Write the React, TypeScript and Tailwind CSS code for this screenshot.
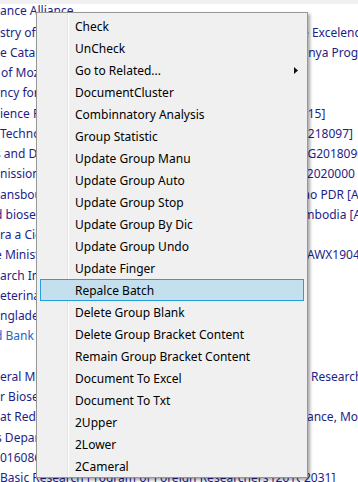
// App.tsx
interface BgRow {
  left: string;
  leftShift: number;
  right?: string;
  rightAt?: number;
  color?: string;
}

// rows behind the context menu (list scrolled sideways, only the edges show)
const rows: BgRow[] = [
  { left: 'stry of Agriculture', leftShift: 0, right: 'e Excelence', rightAt: 302 },
  { left: 'e Catalan', leftShift: 0, right: 'Kenya Program', rightAt: 294 },
  { left: 'of Mozambique', leftShift: 1 },
  { left: 'ncy for', leftShift: 0 },
  { left: 'ience Fund', leftShift: 0, right: '2015]', rightAt: 294 },
  { left: 'Technology', leftShift: 0, right: '0218097]', rightAt: 301 },
  { left: 's and Development', leftShift: -5, right: 'AG2018090', rightAt: 300 },
  { left: 'nission', leftShift: 0, right: 'Z2020000', rightAt: 300 },
  { left: 'ansbourg', leftShift: 0, right: 'Lao PDR [A', rightAt: 297 },
  { left: 'd biosecurity', leftShift: -5, right: 'Cambodia [A', rightAt: 289 },
  { left: 'ra a Ciencia', leftShift: 0 },
  { left: 'e Ministry', leftShift: -5, right: '[AWX19040', rightAt: 303 },
  { left: 'arch Institute', leftShift: 0 },
  { left: 'eterinary', leftShift: 0 },
  { left: 'nglades', leftShift: 0 },
  { left: 'd Bank', leftShift: -5, color: 'text-[#2566c6]' },
  { left: '', leftShift: 0 },
  { left: 'eral Ministry', leftShift: 0, right: 'r Research', rightAt: 303 },
  { left: 'r Biosecurity', leftShift: 0 },
  { left: 'at Red', leftShift: 0, right: 'Alliance, Mo', rightAt: 290 },
  { left: 's Department', leftShift: -4 },
  { left: '016086', leftShift: 0 },
  { left: 'Basic Research Program of Foreign Researchers [2016YF', leftShift: 0, right: '2031]', rightAt: 304 },
];

const items = [
  'Check',
  'UnCheck',
  'Go to Related...',
  'DocumentCluster',
  'Combinnatory Analysis',
  'Group Statistic',
  'Update Group Manu',
  'Update Group Auto',
  'Update Group Stop',
  'Update Group By Dic',
  'Update Group Undo',
  'Update Finger',
  'Repalce Batch',
  'Delete Group Blank',
  'Delete Group Bracket Content',
  'Remain Group Bracket Content',
  'Document To Excel',
  'Document To Txt',
  '2Upper',
  '2Lower',
  '2Cameral',
];

function ContextMenu() {
  return (
    <div className="absolute left-[36px] top-[12px] w-[272px] border border-[#979797] bg-[#f0f0f0] pt-[2px] shadow-[2px_2px_3px_rgba(0,0,0,0.35)]">
      {/* icon column divider */}
      <div className="absolute left-[30px] top-0 bottom-0 w-[1px] bg-[#e2e3e3]" />
      <div className="absolute left-[31px] top-0 bottom-0 w-[1px] bg-white" />
      {items.map((label) => {
        const active = label === 'Repalce Batch';
        return (
          <div
            key={label}
            className={
              active
                ? 'relative mx-[3px] flex h-[22px] items-center border border-[#26a0da] bg-[#c4e0ef] pl-[34px] pt-[2px] text-black'
                : 'relative mx-[3px] flex h-[22px] items-center border border-transparent pl-[34px] pt-[2px] text-black'
            }
          >
            <span>{label}</span>
            {label === 'Go to Related...' && (
              <svg className="ml-auto mr-[5px] mb-[1px]" width="4" height="7" viewBox="0 0 4 7">
                <path d="M0 0L4 3.5L0 7Z" fill="#111" />
              </svg>
            )}
          </div>
        );
      })}
    </div>
  );
}

export default function App() {
  return (
    <div className="relative h-[482px] w-[358px] overflow-hidden bg-white font-['Noto_Sans',sans-serif] text-[12px] text-[#1e1e88]">
      <div className="h-[4px] bg-[#f0f0f0]" />
      <div className="mt-[-4px] flex h-[22.5px] items-center whitespace-nowrap pb-[1px]">ance Alliance</div>
      {rows.map((r, i) => (
        <div key={i} className={`flex h-[20.25px] items-center whitespace-nowrap ${r.color ?? ''}`}>
          <div className="w-[300px] shrink-0 overflow-hidden">
            <span className="block" style={{ marginLeft: r.leftShift }}>
              {r.left}
            </span>
          </div>
          {r.right && (
            <span className="shrink-0" style={{ marginLeft: (r.rightAt ?? 300) - 300 }}>
              {r.right}
            </span>
          )}
        </div>
      ))}
      <ContextMenu />
    </div>
  );
}
